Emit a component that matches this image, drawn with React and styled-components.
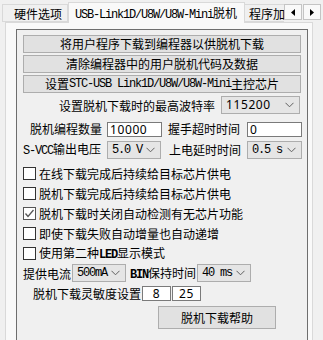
import React from "react";
import styled, { createGlobalStyle } from "styled-components";

const GlobalStyle = createGlobalStyle`
  html, body {
    margin: 0;
    padding: 0;
    background: #f0f0f0;
  }
  body {
    width: 323px;
    height: 340px;
    overflow: hidden;
    font-family: "Noto Sans CJK SC", "Noto Sans", sans-serif;
    font-size: 12px;
    color: #000;
  }
`;

const Window = styled.div`
  width: 323px;
  height: 340px;
  overflow: hidden;
  display: flex;
  flex-direction: column;
`;

const TabStrip = styled.div`
  display: flex;
  align-items: flex-end;
  height: 20px;
  margin-top: 2px;
  padding-left: 2px;
  position: relative;
  z-index: 1;
`;

const TabRow = styled.div`
  display: flex;
  align-items: flex-end;
  width: 282px;
  height: 21px;
  overflow: hidden;
  align-self: flex-start;
`;

const Tab = styled.div`
  flex: none;
  box-sizing: border-box;
  height: ${({ $active }) => ($active ? "21px" : "18px")};
  margin-bottom: ${({ $active }) => ($active ? "0" : "1px")};
  padding: ${({ $pad }) => $pad};
  line-height: ${({ $active }) => ($active ? "19px" : "17px")};
  background: ${({ $active }) => ($active ? "#f9f9f9" : "#f0f0f0")};
  border: 1px solid #d9d9d9;
  border-bottom: ${({ $active }) => ($active ? "none" : "1px solid #d9d9d9")};
  border-left: ${({ $first, $active }) =>
    $first || $active ? "1px solid #d9d9d9" : "none"};
  white-space: nowrap;
  width: ${({ $w }) => $w};
`;

const Arrows = styled.div`
  display: flex;
  gap: 1px;
  align-self: flex-start;
  margin-top: 2px;
`;

const ArrowButton = styled.div`
  width: 18px;
  height: 16px;
  box-sizing: border-box;
  border: 1px solid #c4c4c4;
  background: #f9f9f9;
  display: flex;
  align-items: center;
  justify-content: center;
`;

const Mono = styled.span`
  font-family: "Liberation Mono", "DejaVu Sans Mono", monospace;
  font-size: 12px;
  letter-spacing: -1.2px;
  font-weight: ${({ $bold }) => ($bold ? 700 : 400)};
`;

const Panel = styled.div`
  margin-left: 5px;
  width: 308px;
  flex: 1;
  box-sizing: border-box;
  border: 1px solid #d9d9d9;
  background: #f9f9f9;
  padding: 6px 0 0 10px;
`;

const GroupBox = styled.div`
  width: 292px;
  height: 330px;
  box-sizing: border-box;
  border: 1px solid #6e6e6e;
  background: #f0f0f0;
  padding: 5px 6px 0 6px;
  display: flex;
  flex-direction: column;
`;

const Button = styled.div`
  box-sizing: border-box;
  height: ${({ $h }) => $h || "18px"};
  width: ${({ $w }) => $w || "278px"};
  margin-top: ${({ $mt }) => $mt || "0"};
  margin-left: ${({ $ml }) => $ml || "0"};
  background: #e1e1e1;
  border: 1px solid #adadad;
  display: flex;
  align-items: center;
  justify-content: center;
  white-space: nowrap;
  line-height: 1;
`;

const Row = styled.div`
  display: flex;
  align-items: center;
  margin-top: ${({ $mt }) => $mt || "0"};
  padding-left: ${({ $pl }) => $pl || "0"};
  justify-content: ${({ $end }) => ($end ? "flex-end" : "flex-start")};
  gap: ${({ $gap }) => $gap || "0"};
  padding-right: ${({ $pr }) => $pr || "0"};
  white-space: nowrap;
`;

const FieldGrid = styled.div`
  display: grid;
  grid-template-columns: 84px 55px 85px 55px;
  align-items: center;
  margin-top: ${({ $mt }) => $mt || "0"};
`;

const Label = styled.div`
  text-align: right;
  padding-right: ${({ $pr }) => $pr || "5px"};
  white-space: nowrap;
  line-height: 16px;
`;

const InlineLabel = styled.span`
  margin-left: ${({ $ml }) => $ml || "0"};
`;

const Combo = styled.div`
  box-sizing: border-box;
  width: ${({ $w }) => $w};
  height: 18px;
  background: #e5e5e5;
  border: 1px solid #adadad;
  display: flex;
  align-items: center;
  justify-content: space-between;
  padding: 0 5px 0 4px;
`;

const ValueText = styled.span`
  font-family: "Noto Sans", sans-serif;
  font-size: 12px;
  letter-spacing: 0.6px;
  line-height: 1;
`;

const TextBox = styled.input`
  box-sizing: border-box;
  width: ${({ $w }) => $w};
  height: ${({ $h }) => $h || "15px"};
  border: 1px solid #7a7a7a;
  background: #fff;
  padding: 0 2px;
  margin: 0;
  font-family: "Noto Sans", sans-serif;
  font-size: 12px;
  letter-spacing: 0.6px;
  text-align: ${({ $center }) => ($center ? "center" : "left")};
  outline: none;
  color: #000;
`;

const CheckList = styled.div`
  display: flex;
  flex-direction: column;
  margin-top: 4px;
`;

const CheckRow = styled.label`
  display: flex;
  align-items: center;
  height: 20px;
  gap: 3px;
  white-space: nowrap;
`;

const Box = styled.span`
  width: 13px;
  height: 13px;
  box-sizing: border-box;
  border: 1px solid ${({ $checked }) => ($checked ? "#555" : "#333")};
  background: #fff;
  display: flex;
  align-items: center;
  justify-content: center;
  flex: none;
`;

const Chevron = () => (
  <svg width="9" height="6" viewBox="0 0 9 6">
    <polyline points="0.5,0.8 4.5,4.8 8.5,0.8" fill="none" stroke="#606060" strokeWidth="1" />
  </svg>
);

const Check = () => (
  <svg width="11" height="11" viewBox="0 0 11 11">
    <polyline points="1.5,5.5 4,8.5 9.5,2" fill="none" stroke="#555" strokeWidth="1.3" />
  </svg>
);

const Tri = ({ left }) => (
  <svg width="4" height="7" viewBox="0 0 4 7">
    <polygon points={left ? "4,0 0,3.5 4,7" : "0,0 4,3.5 0,7"} fill="#000" />
  </svg>
);

const CheckItem = ({ checked, children }) => (
  <CheckRow>
    <Box $checked={checked}>{checked && <Check />}</Box>
    <span>{children}</span>
  </CheckRow>
);

const Select = ({ w, children }) => (
  <Combo $w={w}>
    {children}
    <Chevron />
  </Combo>
);

export default function App() {
  return (
    <>
      <GlobalStyle />
      <Window>
        <TabStrip>
          <TabRow>
            <Tab $first $w="66px" $pad="0 0 0 11px">硬件选项</Tab>
            <Tab $active $w="177px" $pad="0 0 0 6px">
              <Mono>USB-Link1D/U8W/U8W-Mini</Mono>脱机
            </Tab>
            <Tab $w="80px" $pad="0 0 0 4px">程序加载</Tab>
          </TabRow>
          <Arrows>
            <ArrowButton>
              <Tri left />
            </ArrowButton>
            <ArrowButton>
              <Tri />
            </ArrowButton>
          </Arrows>
        </TabStrip>
        <Panel>
          <GroupBox>
            <Button>将用户程序下载到编程器以供脱机下载</Button>
            <Button $mt="2px">清除编程器中的用户脱机代码及数据</Button>
            <Button $mt="2px">
              设置<Mono>STC-USB Link1D/U8W/U8W-Mini</Mono>主控芯片
            </Button>
            <Row $mt="3px" $end $gap="6px" $pr="1px">
              <span>设置脱机下载时的最高波特率</span>
              <Select w="79px">
                <ValueText>115200</ValueText>
              </Select>
            </Row>
            <FieldGrid $mt="7px">
              <Label>脱机编程数量</Label>
              <TextBox $w="55px" readOnly value="10000" />
              <Label $pr="7px">握手超时时间</Label>
              <TextBox $w="55px" readOnly value="0" />
            </FieldGrid>
            <FieldGrid $mt="4px">
              <Label $pr="7px">
                <Mono>S-VCC</Mono>输出电压
              </Label>
              <Select w="54px">
                <Mono>5.0 V</Mono>
              </Select>
              <Label $pr="6px">上电延时时间</Label>
              <Select w="55px">
                <Mono>0.5 s</Mono>
              </Select>
            </FieldGrid>
            <CheckList>
              <CheckItem>在线下载完成后持续给目标芯片供电</CheckItem>
              <CheckItem>脱机下载完成后持续给目标芯片供电</CheckItem>
              <CheckItem checked>脱机下载时关闭自动检测有无芯片功能</CheckItem>
              <CheckItem>即使下载失败自动增量也自动递增</CheckItem>
              <CheckItem>
                使用第二种<Mono $bold>LED</Mono>显示模式
              </CheckItem>
            </CheckList>
            <Row $mt="1px" $gap="1px">
              <span>提供电流</span>
              <Select w="54px">
                <Mono>500mA</Mono>
              </Select>
              <InlineLabel $ml="3px">
                <Mono $bold>BIN</Mono>保持时间
              </InlineLabel>
              <Select w="54px">
                <Mono>40 ms</Mono>
              </Select>
            </Row>
            <Row $mt="3px" $pl="10px" $gap="1px">
              <span>脱机下载灵敏度设置</span>
              <TextBox $w="29px" $center readOnly value="8" />
              <TextBox $w="29px" $center readOnly value="25" />
            </Row>
            <Button $mt="4px" $h="23px" $w="118px" $ml="135px">
              脱机下载帮助
            </Button>
          </GroupBox>
        </Panel>
      </Window>
    </>
  );
}
